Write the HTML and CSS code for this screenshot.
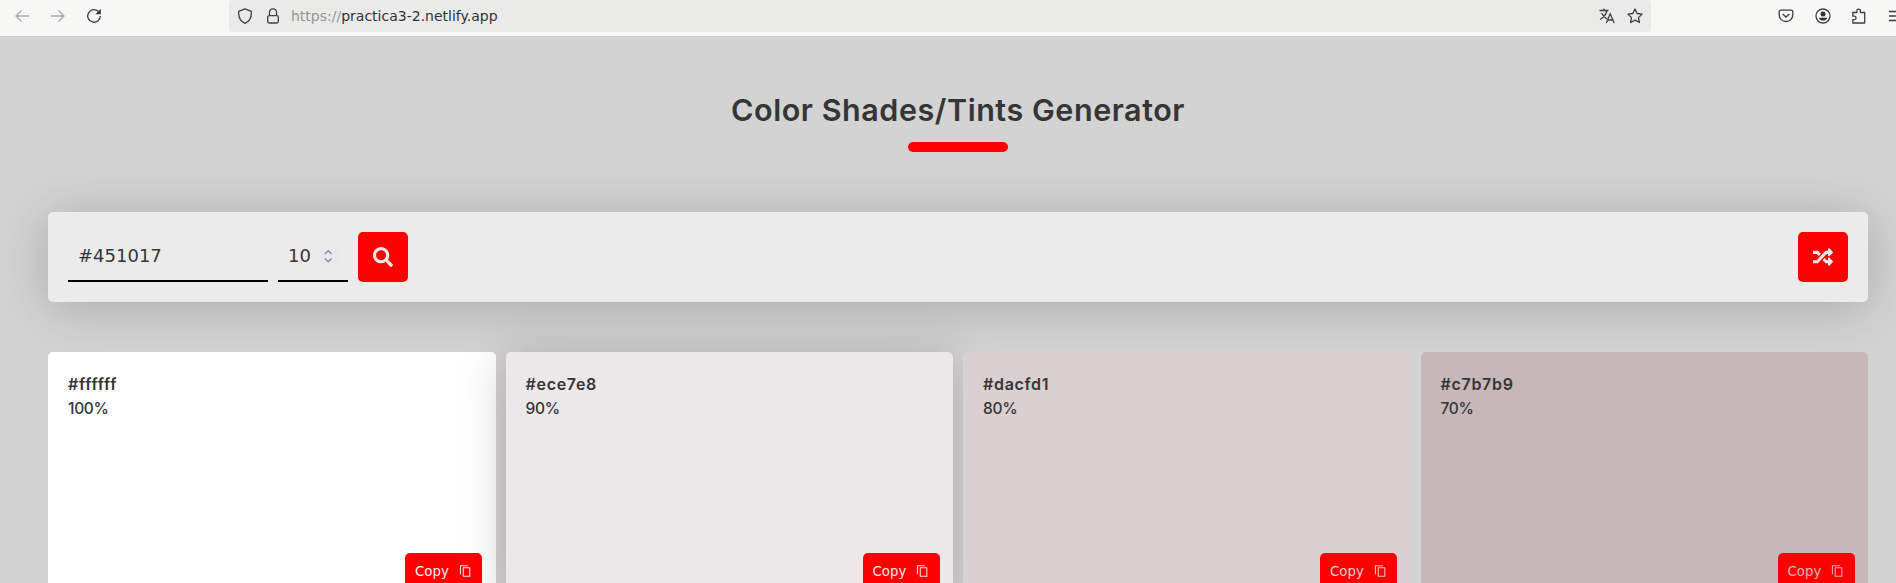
FILE: index.html
```html
<!DOCTYPE html>
<html lang="en">
<head>
<meta charset="utf-8">
<title>Color Shades/Tints Generator</title>
<link rel="stylesheet" href="styles.css">
</head>
<body>
<svg class="defs" width="0" height="0">
  <symbol id="copy" viewBox="0 0 14 14"><path d="M1.500 10.500v-9h8M4.500 3.500h7v9h-7z" fill="none" stroke="currentColor" stroke-width="1.100" stroke-linejoin="round"/></symbol>
</svg>
<div class="screen">
  <header class="toolbar">
    <nav class="nav-buttons">
      <svg class="icon dim" viewBox="0 0 16 16"><path d="M15 8H2M7.500 2.500 2 8l5.500 5.500"/></svg>
      <svg class="icon dim" viewBox="0 0 16 16"><path d="M1 8h13M8.500 2.500 14 8l-5.500 5.500"/></svg>
      <svg class="icon" viewBox="0 0 16 16"><path d="M12.300 3.300A6.300 6.300 0 1 0 14.300 8"/><path class="solid" d="M14.800 .8v5.400H9.400z"/></svg>
    </nav>
    <div class="urlbar">
      <svg class="icon" viewBox="0 0 16 16"><path d="M8 .8 14.300 3.400C14.600 8.500 13 13.200 8 15.300 3 13.200 1.400 8.500 1.700 3.400z" stroke-linejoin="round"/></svg>
      <svg class="icon lock" viewBox="0 0 16 16"><rect x="2.700" y="7.700" width="10.600" height="7.300" rx="1.500"/><path d="M4.500 7.500V4.300a3.500 3.500 0 0 1 7 0v3.200"/></svg>
      <span class="url"><span class="scheme">https://</span>practica3-2.netlify.app</span>
      <svg class="icon translate" viewBox="0 0 16 16"><path d="M.5 2.500h9M5 .5v2M8 2.500C7 6.500 4.500 9.500 1 11.500M2.500 5C4 8 5.500 9.500 8 10.800M7.300 15l3.900-9.200L15.200 15M8.700 12h5"/></svg>
      <svg class="icon" viewBox="0 0 16 16"><path stroke-linejoin="round" d="m8 1 2.150 4.500 4.950.65-3.600 3.450.9 4.900L8 12.100l-4.400 2.400.9-4.900L.9 6.150l4.950-.65z"/></svg>
    </div>
    <div class="tools">
      <svg class="icon" viewBox="0 0 16 16"><path d="M2.700 2.200h10.600a1.500 1.500 0 0 1 1.500 1.500V7A6.800 6.500 0 0 1 1.200 7V3.700a1.500 1.500 0 0 1 1.500-1.500zM4.700 6 8 9l3.300-3"/></svg>
      <svg class="icon" viewBox="0 0 16 16"><circle cx="8" cy="8" r="7"/><circle class="solid" cx="8" cy="6" r="2.500"/><path class="solid" d="M3.700 9.700h8.600c-.6 1.700-2.200 2.900-4.300 2.900s-3.700-1.200-4.300-2.900z"/></svg>
      <svg class="icon" viewBox="0 0 16 16"><path stroke-linejoin="round" d="M1.800 5V4.500h4V3a1.800 1.800 0 0 1 3.600 0v1.500h4.300V15H1.800v-3.300h1.500a1.700 1.700 0 0 0 0-3.500H1.800z"/></svg>
      <svg class="icon" viewBox="0 0 16 16"><path d="M1 3.500h14M1 8h14M1 12.500h14"/></svg>
    </div>
  </header>

  <main class="page">
    <h1 class="title">Color Shades/Tints Generator</h1>
    <div class="underline"></div>

    <form class="panel">
      <div class="field color-field">#451017</div>
      <div class="field count-field">10
        <span class="spinner"><svg viewBox="0 0 16 18" width="16" height="18"><path d="m4.800 7 3.400-3.200L11.600 7M4.800 11.500l3.400 3.200 3.400-3.200"/></svg></span>
      </div>
      <button class="square" type="button" aria-label="Generate"><svg viewBox="0 0 512 512" width="20" height="20"><path fill="currentColor" d="M505 442.700 405.300 343c-4.500-4.500-10.600-7-17-7H372c27.600-35.300 44-79.700 44-128C416 93.100 322.900 0 208 0S0 93.100 0 208s93.100 208 208 208c48.300 0 92.700-16.400 128-44v16.300c0 6.400 2.500 12.500 7 17l99.700 99.700c9.400 9.400 24.600 9.400 33.900 0l28.300-28.300c9.400-9.400 9.400-24.600.1-34zM208 336c-70.700 0-128-57.200-128-128 0-70.700 57.200-128 128-128 70.700 0 128 57.200 128 128 0 70.700-57.200 128-128 128z"/></svg></button>
      <button class="square random" type="button" aria-label="Random"><svg viewBox="0 0 512 512" width="20" height="20"><path fill="currentColor" d="M504.970 359.030c9.370 9.370 9.370 24.570 0 33.940l-80 79.980c-15.010 15.010-40.970 4.490-40.970-16.970V416h-58.780a12 12 0 0 1-8.770-3.810l-70.560-75.600 53.330-57.140L352 336h32v-39.980c0-21.440 25.940-32 40.970-16.970l80 79.980zM12 176h84l52.780 56.550 53.330-57.140-70.560-75.600A12 12 0 0 0 122.790 96H12c-6.630 0-12 5.370-12 12v56c0 6.630 5.370 12 12 12zm372 0v39.980c0 21.460 25.960 31.980 40.970 16.970l80-79.980c9.370-9.370 9.370-24.570 0-33.940l-80-79.980C409.940 24.020 384 34.580 384 56.020V96h-58.780a12 12 0 0 0-8.770 3.810L96 336H12c-6.630 0-12 5.370-12 12v56c0 6.630 5.370 12 12 12h110.790a12 12 0 0 0 8.770-3.810L352 176h32z"/></svg></button>
    </form>

    <section class="cards">
      <article class="card white"><p class="hex">#ffffff</p><p class="pct">100%</p><button class="copy" type="button">Copy<svg width="14" height="14"><use href="#copy"/></svg></button></article>
      <article class="card tint-90"><p class="hex">#ece7e8</p><p class="pct">90%</p><button class="copy" type="button">Copy<svg width="14" height="14"><use href="#copy"/></svg></button></article>
      <article class="card tint-80"><p class="hex">#dacfd1</p><p class="pct">80%</p><button class="copy" type="button">Copy<svg width="14" height="14"><use href="#copy"/></svg></button></article>
      <article class="card tint-70"><p class="hex">#c7b7b9</p><p class="pct">70%</p><button class="copy" type="button">Copy<svg width="14" height="14"><use href="#copy"/></svg></button></article>
    </section>
  </main>
</div>
</body>
</html>
```

FILE: styles.css
```css
* { box-sizing: border-box; }
html, body { margin: 0; height: 583px; overflow: hidden; }
body { background: #d3d3d3; color: #353535; font-family: Inter, sans-serif; }
.defs { display: block; height: 0; }
.screen { width: 1916px; }

.toolbar {
  display: flex;
  height: 37px;
  background: #f7f7f5;
  border-bottom: 1px solid #cfc9c0;
}
.icon {
  width: 16px;
  height: 16px;
  flex: none;
  fill: none;
  stroke: #3b4043;
  stroke-width: 1.3;
}
.icon.dim { stroke: #a5a8a8; }
.icon .solid { fill: #2e3436; stroke: none; }
.nav-buttons { display: flex; gap: 20px; width: 229px; padding: 8px 0 0 14px; }
.urlbar {
  display: flex;
  align-items: flex-start;
  width: 1422px;
  height: 32px;
  padding: 8px 8px 0;
  background: #eaeae8;
  border-radius: 4px;
}
.lock { margin-left: 12px; }
.url {
  margin-left: 10px;
  font: 14px/17px "DejaVu Sans", sans-serif;
  color: #2e3436;
  white-space: nowrap;
}
.scheme { color: #949696; }
.translate { margin-left: auto; margin-right: 12px; }
.tools { display: flex; gap: 20.500px; margin-left: 127px; padding-top: 8px; }

.page { padding: 0 48px; }
.title {
  margin: 50px 0 0;
  font-size: 30.500px;
  font-weight: 600;
  line-height: 45px;
  text-align: center;
  letter-spacing: .550px;
}
.underline {
  width: 100px;
  height: 10px;
  margin: 10px auto 0;
  border-radius: 5px;
  background: #f00;
}
.panel {
  display: flex;
  gap: 10px;
  height: 90px;
  margin-top: 60px;
  padding: 20px;
  border-radius: 5px;
  background: #ebebeb;
  box-shadow: 0 5px 50px rgba(0, 0, 0, .2);
}
.field {
  display: flex;
  align-items: center;
  height: 50px;
  padding: 0 10px 1px;
  border-bottom: 2px solid #000;
  font: 18px "DejaVu Sans", sans-serif;
}
.color-field { width: 200px; }
.count-field { width: 70px; }
.spinner { display: flex; width: 18px; height: 18px; margin-left: auto; background: #e9e9ed; }
.spinner path { fill: none; stroke: #8f8f9d; stroke-width: 1.5; }
.square {
  display: flex;
  align-items: center;
  justify-content: center;
  width: 50px;
  height: 50px;
  padding: 0;
  border: 0;
  border-radius: 5px;
  background: #f00;
  color: #ebebeb;
}
.random { margin-left: auto; }

.cards { display: grid; grid-template-columns: repeat(4, 1fr); gap: 10px; margin-top: 50px; }
.card {
  display: flex;
  position: relative;
  flex-direction: column;
  height: 250px;
  padding: 20px 13.500px 13px 20px;
  border-radius: 5px;
}
.hex, .pct { margin: 0; font-size: 16px; line-height: 24px; }
.hex { font-weight: 600; letter-spacing: .700px; }
.pct { font-weight: 500; font-size: 15.500px; letter-spacing: -.300px; padding-top: 1px; }
.copy {
  display: flex;
  align-items: center;
  gap: 10px;
  width: 77px;
  height: 36px;
  margin: auto 0 0 auto;
  padding: 0 10px;
  border: 0;
  border-radius: 5px;
  background: #f00;
  color: inherit;
  font: 13.330px "DejaVu Sans", sans-serif;
}
.white { background: #fff; }
.white .copy { color: #f5f5f5; }
.tint-90 { background: #ece7e8; box-shadow: 0 5px 50px rgba(0, 0, 0, .2); }
.tint-90 .copy { color: #ece7e8; }
.tint-80 { background: #dacfd1; }
.tint-80 .copy { color: #dacfd1; }
.tint-70 { background: #c7b7b9; }
.tint-70 .copy { color: #c7b7b9; }
```
